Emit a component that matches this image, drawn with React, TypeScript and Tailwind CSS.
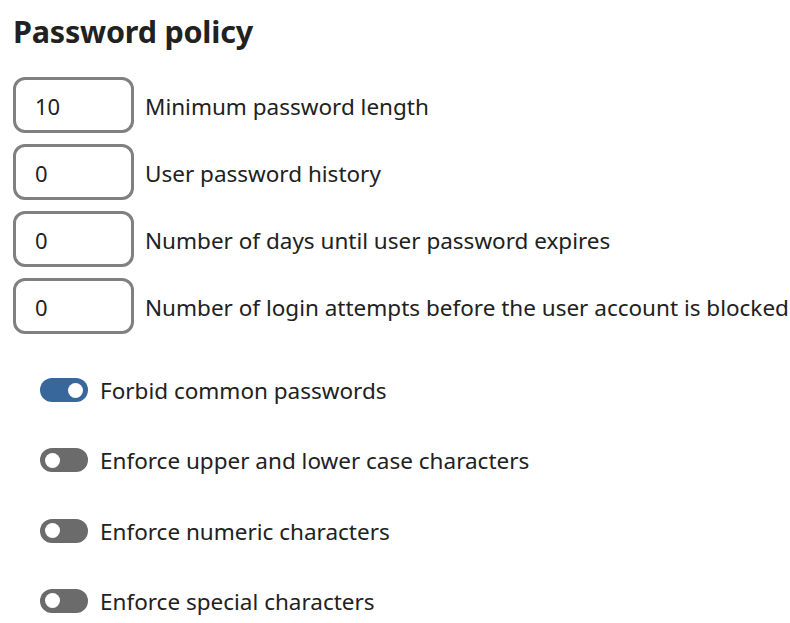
import React from "react";

const fields = [
  { v: "10", label: "Minimum password length" },
  { v: "0", label: "User password history" },
  { v: "0", label: "Number of days until user password expires" },
  { v: "0", label: "Number of login attempts before the user account is blocked" },
];

const toggles = [
  { on: true, label: "Forbid common passwords" },
  { on: false, label: "Enforce upper and lower case characters" },
  { on: false, label: "Enforce numeric characters" },
  { on: false, label: "Enforce special characters" },
];

export default function App() {
  return (
    <div
      className="w-[790px] h-[623px] bg-white text-[#212121] pl-[13px] pt-[11px] overflow-hidden"
      style={{ fontFamily: '"Noto Sans", "Open Sans", sans-serif' }}
    >
      <h1 className="text-[30.5px] font-bold leading-[40px] tracking-[-0.2px]">Password policy</h1>
      <div className="mt-[26px] flex flex-col gap-[11px]">
        {fields.map((f, i) => (
          <div key={i} className="flex items-center">
            <div className="w-[121px] h-[56px] border-[3px] border-[#808080] rounded-[12px] flex items-center pl-[19px] pt-[2px] text-[22px]">
              {f.v}
            </div>
            <span className="ml-[11px] pt-[4px] text-[22.5px] whitespace-nowrap">{f.label}</span>
          </div>
        ))}
      </div>
      <div className="mt-[44px] ml-[27px] flex flex-col gap-[46.3px]">
        {toggles.map((t, i) => (
          <div key={i} className="flex items-center h-[24px]">
            <div
              className={
                t.on
                  ? "w-[48px] h-[24px] rounded-full bg-[#38689b] flex items-center justify-end pr-[5px]"
                  : "w-[48px] h-[24px] rounded-full bg-[#6b6b6b] flex items-center justify-start pl-[5px]"
              }
            >
              <div className="w-[15px] h-[15px] rounded-full bg-white" />
            </div>
            <span className="ml-[12px] pt-[2px] text-[22.5px] whitespace-nowrap">{t.label}</span>
          </div>
        ))}
      </div>
    </div>
  );
}
